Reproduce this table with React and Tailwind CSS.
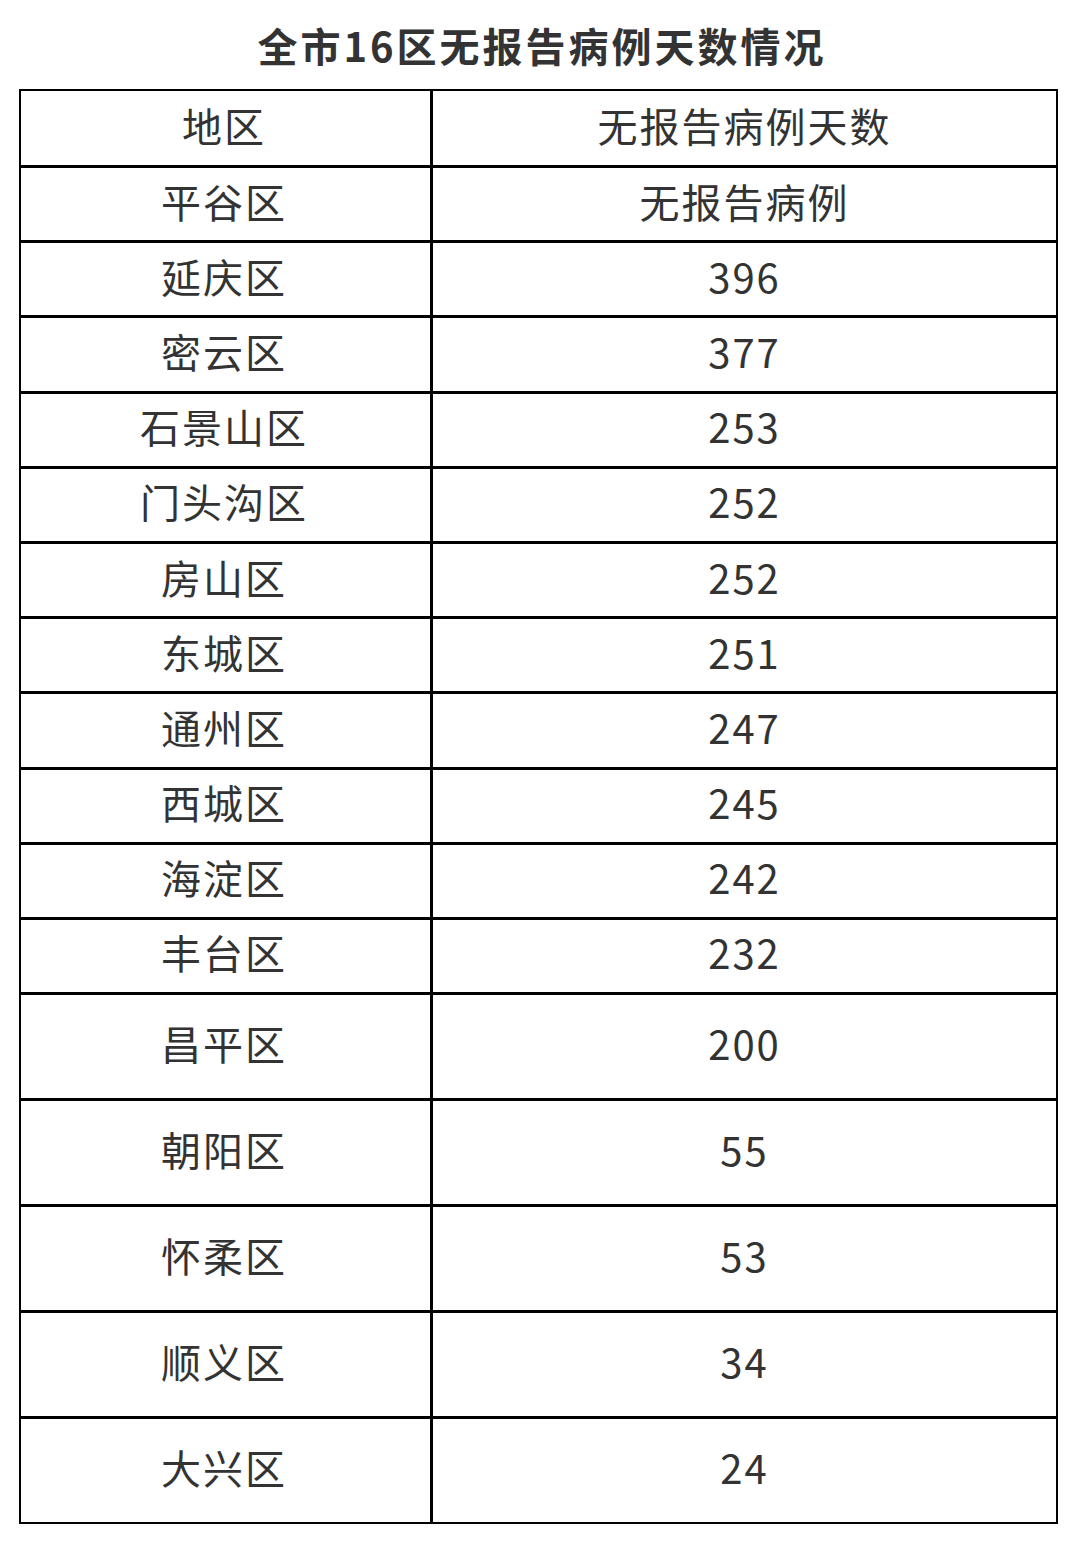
const SHORT_ROWS = [
  ['平谷区', '无报告病例'],
  ['延庆区', '396'],
  ['密云区', '377'],
  ['石景山区', '253'],
  ['门头沟区', '252'],
  ['房山区', '252'],
  ['东城区', '251'],
  ['通州区', '247'],
  ['西城区', '245'],
  ['海淀区', '242'],
  ['丰台区', '232'],
];

const TALL_ROWS = [
  ['昌平区', '200'],
  ['朝阳区', '55'],
  ['怀柔区', '53'],
  ['顺义区', '34'],
  ['大兴区', '24'],
];

function Row({ left, right, size }) {
  // size: 'head' (no top line), 'short' or 'tall'
  const h =
    size === 'head' ? 'h-[74px]' : size === 'tall' ? 'h-[106px] border-t-[3px] border-black' : 'h-[75.2px] border-t-[3px] border-black';
  return (
    <div className={`grid grid-cols-[412px_1fr] ${h}`}>
      <div className="flex items-center justify-center border-r-[3px] border-black tracking-[2px] pb-[7px] pr-[3px]">
        {left}
      </div>
      <div className="flex items-center justify-center tracking-[2px] pb-[7px]">{right}</div>
    </div>
  );
}

export default function App() {
  return (
    <div className="w-[1080px] h-[1549px] bg-white text-[#333] font-['Noto_Sans_CJK_SC','Noto_Sans',sans-serif]">
      <div className="h-[89px] flex items-center justify-center text-[40px] font-bold tracking-[3px] pl-1">
        全市16区无报告病例天数情况
      </div>
      <div className="ml-[19px] w-[1039px] border-2 border-black text-[40px] leading-none">
        <Row left="地区" right="无报告病例天数" size="head" />
        {SHORT_ROWS.map(([l, r]) => (
          <Row key={l} left={l} right={r} size="short" />
        ))}
        {TALL_ROWS.map(([l, r]) => (
          <Row key={l} left={l} right={r} size="tall" />
        ))}
      </div>
    </div>
  );
}
